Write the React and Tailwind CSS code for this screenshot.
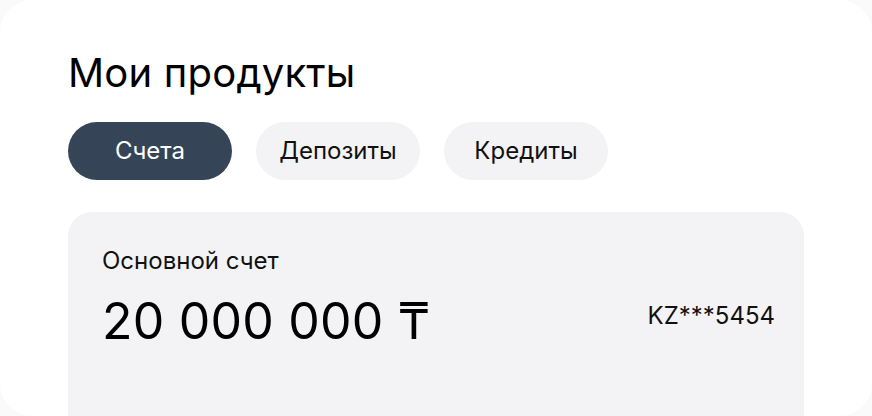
import React from "react";

const font = { fontFamily: "Inter, 'Noto Sans', 'DejaVu Sans', sans-serif" };

export default function App() {
  const tabs = ["Счета", "Депозиты", "Кредиты"];
  return (
    <div className="w-[872px] h-[416px] bg-[#fafafa] overflow-hidden" style={font}>
      <div className="h-full bg-white rounded-[32px] px-[68px] pt-[49px] overflow-hidden">
        <h1 className="text-[40px] leading-[48px] text-black font-normal tracking-[0.2px]">
          Мои продукты
        </h1>
        <div className="flex gap-6 mt-[25px]">
          {tabs.map((t, i) => (
            <div
              key={t}
              className={
                i === 0
                  ? "w-[164px] h-[58px] rounded-full bg-[#364457] text-white flex items-center justify-center text-[24px]"
                  : "w-[164px] h-[58px] rounded-full bg-[#f3f3f5] text-[#111] flex items-center justify-center text-[24px]"
              }
            >
              {t}
            </div>
          ))}
        </div>
        <div className="mt-[32px] h-[260px] bg-[#f3f3f5] rounded-[24px] pl-[34px] pr-[29px] pt-[33px]">
          <div className="text-[24px] leading-[32px] text-[#111]">Основной счет</div>
          <div className="flex justify-between items-start mt-[16px]">
            <div className="text-[50px] leading-[56px] text-black tracking-[0.2px]">20 000 000 ₸</div>
            <div className="text-[24px] leading-[32px] text-[#111] mt-[7px]">KZ***5454</div>
          </div>
        </div>
      </div>
    </div>
  );
}
